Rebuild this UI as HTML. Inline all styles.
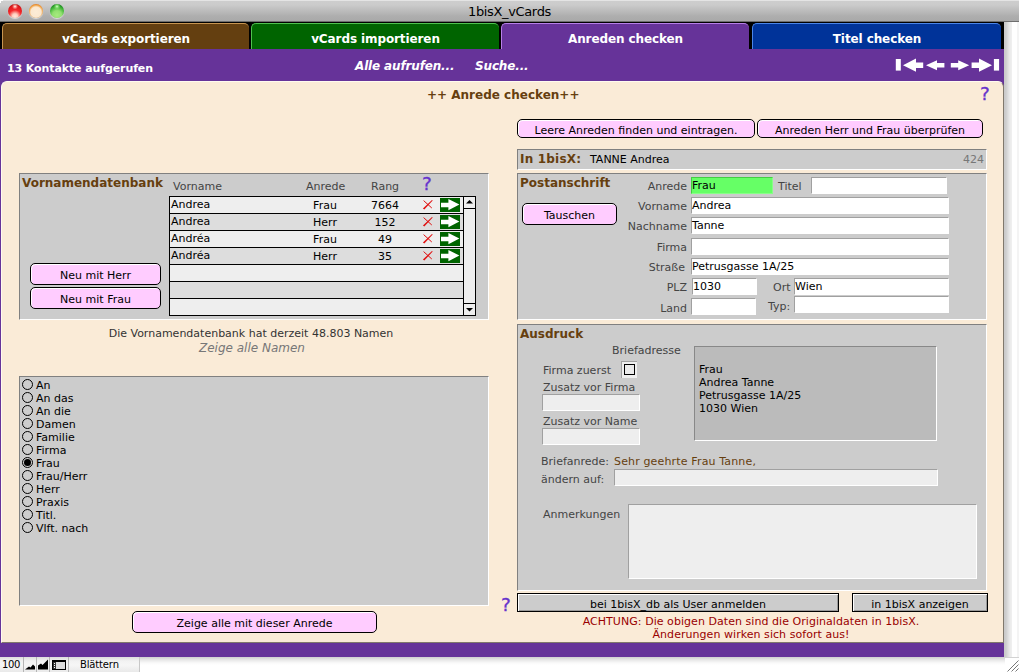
<!DOCTYPE html>
<html lang="de">
<head>
<meta charset="utf-8">
<title>1bisX_vCards</title>
<style>
html,body{margin:0;padding:0;}
body{width:1019px;height:672px;overflow:hidden;background:#fff;position:relative;
 font-family:"DejaVu Sans","Liberation Sans",sans-serif;font-size:11px;line-height:13px;color:#000;}
.a{position:absolute;white-space:nowrap;}
#titlebar{left:0;top:0;width:1019px;height:22px;
 background:linear-gradient(#e6e6e6 0,#e2e2e2 1px,#cdcdcd 1.5px,#cbcbcb 5px,#c3c3c3 8px,#b9b9b9 12px,#aeaeae 16px,#a9a9a9 21px,#a9a9a9 22px);}
#titlebar .ttl{left:0;width:1019px;top:3px;text-align:center;font-size:13px;line-height:17px;letter-spacing:-0.36px;color:#000;}
.light{width:14px;height:14px;border-radius:50%;top:4px;box-shadow:0 1px 1px rgba(255,255,255,.6);}
#tabrow{left:0;top:22px;width:1004px;height:27px;background:#000;}
.tab{top:1px;height:26px;box-sizing:border-box;border-radius:5px 5px 0 0;color:#fff;font-weight:bold;font-size:12px;
 line-height:16px;text-align:center;padding-top:7px;letter-spacing:-0.1px;}
#purple{left:0;top:49px;width:1004px;height:608px;background:#663399;}
#cream{left:1px;top:81px;width:1003px;height:562px;box-sizing:border-box;background:#faebd7;border-radius:6px 6px 0 0;
 border-top:1px solid #fffaf0;border-left:1px solid #fffaf0;border-right:1px solid #80786c;border-bottom:1px solid #80786c;}
.w{color:#fff;font-weight:bold;}
.panel{background:#ccc;box-sizing:border-box;border-top:1px solid #808080;border-left:1px solid #808080;border-right:1px solid #fff;border-bottom:1px solid #fff;}
.h{font-weight:bold;font-size:12px;color:#663f0f;letter-spacing:0;}
.lbl{color:#444;}
.r{text-align:right;}
.btn{box-sizing:border-box;background:#fcf;border:1px solid #000;border-radius:5px;text-align:center;box-shadow:inset 1px 1px 0 #fff;line-height:13px;padding-top:5px;height:22px;}
.fld{box-sizing:border-box;background:#fff;border-top:1px solid #a0a0a0;border-left:1px solid #a0a0a0;border-right:1px solid #fff;border-bottom:1px solid #fff;padding-left:0;padding-top:1px;line-height:13px;}
.fe{background:#eee;}
.gbtn{box-sizing:border-box;background:#ccc;border:1px solid #000;box-shadow:inset 1px 1px 0 #fff,inset -1px -1px 0 #999;text-align:center;}
.q{color:#6633cc;font-size:18.5px;line-height:20px;-webkit-text-stroke:0.3px #6633cc;font-family:"DejaVu Sans",sans-serif;}
.row{left:170px;width:293px;height:16px;}
.x{left:422px;color:#e01010;font-size:13px;line-height:16px;}
.rad{left:22px;width:9px;height:9px;border:1px solid #000;border-radius:50%;background:#cdcdcd;}
</style>
</head>
<body>

<!-- ======= window title bar ======= -->
<div id="titlebar" class="a">
  <div class="a light" style="left:8px;background:radial-gradient(circle at 50% 18%,#fff 0,#ff9a90 8%,rgba(255,255,255,0) 22%),radial-gradient(circle at 50% 88%,#ffe6d8 0,#ffd0c0 18%,#f4282a 45%,#e01a1c 70%,#8c1010 100%);"></div>
  <div class="a light" style="left:29px;background:radial-gradient(circle at 50% 58%,#fdecd6 0,#fbe8d0 48%,#f0a040 66%,#d8600c 82%,#a84808 100%);"></div>
  <div class="a light" style="left:50px;background:radial-gradient(circle at 50% 18%,#d8ffd0 0,#7fdc6a 10%,rgba(255,255,255,0) 24%),radial-gradient(circle at 50% 80%,#a6ea7e 0,#92e070 35%,#4cbc40 58%,#1c8c20 80%,#0c6010 100%);"></div>
  <div class="a ttl">1bisX_vCards</div>
  <div class="a" style="left:0;top:21px;width:1019px;height:1px;background:#6e6e6e;"></div>
  <div class="a" style="left:0;top:0;width:3px;height:1px;background:#fff;"></div><div class="a" style="left:0;top:1px;width:1px;height:2px;background:#fff;"></div>
</div>

<!-- ======= tabs ======= -->
<div id="tabrow" class="a">
  <div class="a tab" style="left:2px;width:247px;background:#643f10;border-top:1px solid #c89550;border-left:1px solid #c89550;">vCards exportieren</div>
  <div class="a tab" style="left:251px;width:248px;background:#006400;border-top:1px solid #4fc24f;border-left:1px solid #4fc24f;">vCards importieren</div>
  <div class="a tab" style="left:501px;width:248px;background:#663399;border-top:1px solid #b77fe8;border-left:1px solid #b77fe8;">Anreden checken</div>
  <div class="a tab" style="left:752px;width:249px;background:#003399;border-top:1px solid #4a85e8;border-left:1px solid #4a85e8;">Titel checken</div>
</div>

<div id="purple" class="a"></div>
<div id="cream" class="a"></div>

<!-- ======= purple header row ======= -->
<div class="a w" style="left:7px;top:62px;font-size:11px;line-height:14px;letter-spacing:-0.1px;">13 Kontakte aufgerufen</div>
<div class="a w" style="left:355px;top:59px;font-size:12px;line-height:15px;font-style:italic;letter-spacing:-0.15px;">Alle aufrufen...</div>
<div class="a w" style="left:475px;top:59px;font-size:12px;line-height:15px;font-style:italic;letter-spacing:-0.15px;">Suche...</div>
<svg class="a" style="left:895px;top:56px;" width="106" height="18" viewBox="0 0 106 18">
  <g fill="#fff">
    <rect x="0.8" y="3" width="5" height="11.6"/>
    <path d="M8 9.2 L21 2.6 L21 6.4 L28.2 6.4 L28.2 12 L21 12 L21 15.8 Z"/>
    <path d="M31 9.2 L42 4.2 L42 6.9 L49.4 6.9 L49.4 11.5 L42 11.5 L42 14.2 Z"/>
    <path d="M74.2 9.2 L63.2 4.2 L63.2 6.9 L55.8 6.9 L55.8 11.5 L63.2 11.5 L63.2 14.2 Z"/>
    <path d="M97 9.2 L84 2.6 L84 6.4 L76.6 6.4 L76.6 12 L84 12 L84 15.8 Z"/>
    <rect x="98.9" y="3" width="5.2" height="11.6"/>
  </g>
</svg>

<!-- ======= heading ======= -->
<div class="a h" style="left:427px;top:88px;line-height:15px;">++ Anrede checken++</div>
<div class="a q" style="left:980px;top:84px;">?</div>

<!-- ======= window scrollbars / status bar ======= -->
<div class="a" style="left:1004px;top:22px;width:15px;height:635px;background:linear-gradient(90deg,#c9c9c9 0,#cecece 2px,#dedede 4px,#ebebeb 6px,#f0f0f0 8px,#fff 8.5px,#fff 13px,#f4f4f4 13.5px,#f4f4f4 15px);"></div>
<div class="a" style="left:0;top:657px;width:1019px;height:15px;background:linear-gradient(#cfcfcf 0,#e8e8e8 3px,#fafafa 6px,#fff 8px,#fff 100%);"></div>
<div class="a" style="left:1005px;top:658px;width:14px;height:14px;background:#fff;"></div>
<svg class="a" style="left:1005px;top:658px;" width="14" height="14" viewBox="0 0 14 14"><g stroke="#777" stroke-width="1"><path d="M2.5 13.5 L13.5 2.5 M6.5 13.5 L13.5 6.5 M10.5 13.5 L13.5 10.5" fill="none"/></g></svg>
<div class="a" style="left:0;top:657px;width:139px;height:15px;background:linear-gradient(#dcdcdc 0,#f2f2f2 4px,#f6f6f6 8px,#e9e9e9 15px);"></div>
<div class="a" style="left:23px;top:657px;width:1px;height:15px;background:#b5b5b5;"></div>
<div class="a" style="left:36px;top:657px;width:1px;height:15px;background:#b5b5b5;"></div>
<div class="a" style="left:49px;top:657px;width:1px;height:15px;background:#b5b5b5;"></div>
<div class="a" style="left:68px;top:657px;width:1px;height:15px;background:#b5b5b5;"></div>
<div class="a" style="left:139px;top:657px;width:1px;height:15px;background:#c8c8c8;"></div>
<div class="a" style="left:2px;top:658px;font-size:10px;line-height:13px;letter-spacing:-0.3px;">100</div>
<svg class="a" style="left:24px;top:658px;" width="45" height="14" viewBox="0 0 45 14">
  <path d="M1 11.5 L5 8.5 L6.5 9.5 L9 6.5 L11 8.5 L11 11.5 Z" fill="#000"/>
  <path d="M14 11.5 L14 7.5 L17 5.5 L18.5 7 L24 1.5 L24 11.5 Z" fill="#000"/>
  <rect x="28.5" y="2.5" width="13" height="9" fill="#ddd" stroke="#000"/>
  <rect x="28" y="2" width="14" height="2" fill="#000"/>
  <rect x="29" y="4" width="3" height="7" fill="#333"/>
  <rect x="30" y="5" width="1" height="1" fill="#fff"/><rect x="30" y="7" width="1" height="1" fill="#fff"/><rect x="30" y="9" width="1" height="1" fill="#fff"/>
</svg>
<div class="a" style="left:80px;top:658px;font-size:10px;line-height:13px;letter-spacing:-0.15px;">Blättern</div>

<!-- ======= Vornamendatenbank panel ======= -->
<div class="a panel" style="left:19px;top:173px;width:470px;height:147px;"></div>
<div class="a h" style="left:22px;top:176px;line-height:15px;">Vornamendatenbank</div>
<div class="a lbl" style="left:173px;top:180px;">Vorname</div>
<div class="a lbl" style="left:306px;top:180px;">Anrede</div>
<div class="a lbl" style="left:371px;top:180px;">Rang</div>
<div class="a q" style="left:422px;top:174px;">?</div>
<div class="a" style="left:169px;top:196px;width:307px;height:120px;background:#000;"></div>
<div class="a row" style="top:197px;background:#eee;"></div>
<div class="a" style="left:171px;top:198px;">Andrea</div><div class="a" style="left:295px;top:199px;width:60px;text-align:center;">Frau</div><div class="a" style="left:355px;top:199px;width:60px;text-align:center;">7664</div>
<svg class="a" style="left:422px;top:199px;" width="12" height="12" viewBox="0 0 12 12"><path d="M0.9 9.4 L2.3 10.6 L10.7 1.6 L10.0 1.0 Z" fill="#e01010"/><path d="M1.6 1.6 L9.8 9.0" stroke="#e01010" stroke-width="1" fill="none"/></svg><svg class="a" style="left:440px;top:198px;" width="20" height="14" viewBox="0 0 20 14"><rect width="20" height="14" fill="#006400"/><path d="M1 4.8 H8.4 V1 L19.4 6.6 L8.4 12.2 V9.2 H1 Z" fill="#fff"/></svg>
<div class="a row" style="top:214px;background:#ddd;"></div>
<div class="a" style="left:171px;top:215px;">Andrea</div><div class="a" style="left:295px;top:216px;width:60px;text-align:center;">Herr</div><div class="a" style="left:355px;top:216px;width:60px;text-align:center;">152</div>
<svg class="a" style="left:422px;top:216px;" width="12" height="12" viewBox="0 0 12 12"><path d="M0.9 9.4 L2.3 10.6 L10.7 1.6 L10.0 1.0 Z" fill="#e01010"/><path d="M1.6 1.6 L9.8 9.0" stroke="#e01010" stroke-width="1" fill="none"/></svg><svg class="a" style="left:440px;top:215px;" width="20" height="14" viewBox="0 0 20 14"><rect width="20" height="14" fill="#006400"/><path d="M1 4.8 H8.4 V1 L19.4 6.6 L8.4 12.2 V9.2 H1 Z" fill="#fff"/></svg>
<div class="a row" style="top:231px;background:#eee;"></div>
<div class="a" style="left:171px;top:232px;">Andréa</div><div class="a" style="left:295px;top:233px;width:60px;text-align:center;">Frau</div><div class="a" style="left:355px;top:233px;width:60px;text-align:center;">49</div>
<svg class="a" style="left:422px;top:233px;" width="12" height="12" viewBox="0 0 12 12"><path d="M0.9 9.4 L2.3 10.6 L10.7 1.6 L10.0 1.0 Z" fill="#e01010"/><path d="M1.6 1.6 L9.8 9.0" stroke="#e01010" stroke-width="1" fill="none"/></svg><svg class="a" style="left:440px;top:232px;" width="20" height="14" viewBox="0 0 20 14"><rect width="20" height="14" fill="#006400"/><path d="M1 4.8 H8.4 V1 L19.4 6.6 L8.4 12.2 V9.2 H1 Z" fill="#fff"/></svg>
<div class="a row" style="top:248px;background:#ddd;"></div>
<div class="a" style="left:171px;top:249px;">Andréa</div><div class="a" style="left:295px;top:250px;width:60px;text-align:center;">Herr</div><div class="a" style="left:355px;top:250px;width:60px;text-align:center;">35</div>
<svg class="a" style="left:422px;top:250px;" width="12" height="12" viewBox="0 0 12 12"><path d="M0.9 9.4 L2.3 10.6 L10.7 1.6 L10.0 1.0 Z" fill="#e01010"/><path d="M1.6 1.6 L9.8 9.0" stroke="#e01010" stroke-width="1" fill="none"/></svg><svg class="a" style="left:440px;top:249px;" width="20" height="14" viewBox="0 0 20 14"><rect width="20" height="14" fill="#006400"/><path d="M1 4.8 H8.4 V1 L19.4 6.6 L8.4 12.2 V9.2 H1 Z" fill="#fff"/></svg>
<div class="a row" style="top:265px;background:#eee;"></div>
<div class="a row" style="top:282px;background:#ddd;"></div>
<div class="a row" style="top:299px;background:#eee;"></div>

<div class="a" style="left:464px;top:197px;width:11px;height:11px;background:#eee;"></div>
<div class="a" style="left:464px;top:209px;width:11px;height:94px;background:#eee;"></div>
<div class="a" style="left:464px;top:304px;width:11px;height:11px;background:#eee;"></div>
<svg class="a" style="left:464px;top:197px;" width="11" height="11" viewBox="0 0 11 11"><path d="M2 6.5 L5.5 3 L9 6.5 Z" fill="#000"/></svg>
<svg class="a" style="left:464px;top:304px;" width="11" height="11" viewBox="0 0 11 11"><path d="M2 4 L5.5 7.5 L9 4 Z" fill="#000"/></svg>
<div class="a btn" style="left:30px;top:263px;width:131px;">Neu mit Herr</div>
<div class="a btn" style="left:30px;top:287px;width:131px;">Neu mit Frau</div>
<div class="a" style="left:18px;top:327px;width:466px;text-align:center;color:#333;">Die Vornamendatenbank hat derzeit 48.803 Namen</div>
<div class="a" style="left:19px;top:341px;width:466px;text-align:center;color:#777;font-style:italic;font-size:12px;line-height:15px;">Zeige alle Namen</div>

<!-- ======= Anrede radio list panel ======= -->
<div class="a panel" style="left:19px;top:376px;width:470px;height:230px;"></div>
<div class="a rad" style="top:379px;"></div><div class="a" style="left:36px;top:379px;">An</div>
<div class="a rad" style="top:392px;"></div><div class="a" style="left:36px;top:392px;">An das</div>
<div class="a rad" style="top:405px;"></div><div class="a" style="left:36px;top:405px;">An die</div>
<div class="a rad" style="top:418px;"></div><div class="a" style="left:36px;top:418px;">Damen</div>
<div class="a rad" style="top:431px;"></div><div class="a" style="left:36px;top:431px;">Familie</div>
<div class="a rad" style="top:444px;"></div><div class="a" style="left:36px;top:444px;">Firma</div>
<div class="a rad" style="top:457px;"></div><div class="a" style="left:24px;top:459px;width:7px;height:7px;border-radius:50%;background:#000;"></div><div class="a" style="left:36px;top:457px;">Frau</div>
<div class="a rad" style="top:470px;"></div><div class="a" style="left:36px;top:470px;">Frau/Herr</div>
<div class="a rad" style="top:483px;"></div><div class="a" style="left:36px;top:483px;">Herr</div>
<div class="a rad" style="top:496px;"></div><div class="a" style="left:36px;top:496px;">Praxis</div>
<div class="a rad" style="top:509px;"></div><div class="a" style="left:36px;top:509px;">Titl.</div>
<div class="a rad" style="top:522px;"></div><div class="a" style="left:36px;top:522px;">Vlft. nach</div>
<div class="a btn" style="left:132px;top:611px;width:245px;">Zeige alle mit dieser Anrede</div>

<!-- ======= right column ======= -->
<div class="a btn" style="left:517px;top:119px;width:238px;height:19px;padding-top:4px;">Leere Anreden finden und eintragen.</div>
<div class="a btn" style="left:757px;top:119px;width:226px;height:19px;padding-top:4px;">Anreden Herr und Frau überprüfen</div>

<div class="a panel" style="left:517px;top:149px;width:470px;height:21px;"></div>
<div class="a h" style="left:520px;top:152px;line-height:15px;letter-spacing:0.2px;">In 1bisX:</div>
<div class="a" style="left:590px;top:153px;">TANNE Andrea</div>
<div class="a" style="left:921px;top:153px;width:63px;text-align:right;color:#777;">424</div>

<div class="a panel" style="left:517px;top:173px;width:470px;height:147px;"></div>
<div class="a h" style="left:520px;top:176px;line-height:15px;">Postanschrift</div>
<div class="a btn" style="left:522px;top:203px;width:95px;">Tauschen</div>

<div class="a lbl r" style="left:600px;width:87px;top:180px;">Anrede</div>
<div class="a fld" style="left:691px;top:177px;width:82px;height:17px;background:#6f6;border-color:#4c4 #8f8 #8f8 #4c4;">Frau</div>
<div class="a lbl" style="left:778px;top:180px;">Titel</div>
<div class="a fld" style="left:811px;top:177px;width:136px;height:17px;"></div>

<div class="a lbl r" style="left:600px;width:87px;top:200px;">Vorname</div>
<div class="a fld" style="left:691px;top:197px;width:258px;height:17px;">Andrea</div>
<div class="a lbl r" style="left:600px;width:87px;top:220px;">Nachname</div>
<div class="a fld" style="left:691px;top:217px;width:258px;height:17px;">Tanne</div>
<div class="a lbl r" style="left:600px;width:87px;top:241px;">Firma</div>
<div class="a fld" style="left:691px;top:238px;width:258px;height:17px;"></div>
<div class="a lbl r" style="left:600px;width:85px;top:261px;">Straße</div>
<div class="a fld" style="left:691px;top:258px;width:258px;height:17px;">Petrusgasse 1A/25</div>
<div class="a lbl r" style="left:600px;width:87px;top:281px;">PLZ</div>
<div class="a fld" style="left:692px;top:278px;width:65px;height:17px;">1030</div>
<div class="a lbl" style="left:773px;top:281px;">Ort</div>
<div class="a fld" style="left:794px;top:278px;width:155px;height:17px;">Wien</div>
<div class="a lbl r" style="left:600px;width:87px;top:302px;">Land</div>
<div class="a fld" style="left:691px;top:298px;width:65px;height:17px;"></div>
<div class="a lbl" style="left:768px;top:300px;">Typ:</div>
<div class="a fld" style="left:794px;top:296px;width:155px;height:17px;"></div>

<div class="a panel" style="left:517px;top:324px;width:470px;height:267px;"></div>
<div class="a h" style="left:520px;top:327px;line-height:15px;">Ausdruck</div>
<div class="a lbl" style="left:612px;top:344px;">Briefadresse</div>
<div class="a lbl" style="left:543px;top:364px;">Firma zuerst</div>
<div class="a" style="left:621px;top:361px;width:16px;height:17px;box-sizing:border-box;background:#eee;border-top:1px solid #a0a0a0;border-left:1px solid #a0a0a0;"></div>
<div class="a" style="left:624px;top:364px;width:11px;height:11px;box-sizing:border-box;border:1px solid #000;background:#eaeaea;"></div>
<div class="a lbl" style="left:543px;top:381px;">Zusatz vor Firma</div>
<div class="a fld fe" style="left:542px;top:394px;width:98px;height:17px;"></div>
<div class="a lbl" style="left:543px;top:415px;">Zusatz vor Name</div>
<div class="a fld fe" style="left:542px;top:428px;width:98px;height:17px;"></div>
<div class="a" style="left:694px;top:346px;width:243px;height:95px;box-sizing:border-box;background:#bbb;border-top:1px solid #888;border-left:1px solid #888;border-right:1px solid #fff;border-bottom:1px solid #fff;"></div>
<div class="a" style="left:699px;top:363px;line-height:13px;white-space:pre;">Frau
Andrea Tanne
Petrusgasse 1A/25
1030 Wien</div>
<div class="a lbl" style="left:541px;top:455px;">Briefanrede:</div>
<div class="a" style="left:614px;top:455px;color:#663f0f;letter-spacing:0.15px;">Sehr geehrte Frau Tanne,</div>
<div class="a lbl" style="left:541px;top:473px;">ändern auf:</div>
<div class="a fld fe" style="left:614px;top:469px;width:324px;height:17px;"></div>
<div class="a lbl" style="left:543px;top:508px;">Anmerkungen</div>
<div class="a fld fe" style="left:628px;top:504px;width:349px;height:75px;"></div>

<div class="a q" style="left:501px;top:595px;">?</div>
<div class="a gbtn" style="left:517px;top:593px;width:322px;height:19px;line-height:13px;padding-top:4px;">bei 1bisX_db als User anmelden</div>
<div class="a gbtn" style="left:852px;top:593px;width:136px;height:19px;line-height:13px;padding-top:4px;">in 1bisX anzeigen</div>
<div class="a" style="left:516px;top:615px;width:470px;text-align:center;color:#990000;letter-spacing:0.05px;line-height:13px;white-space:pre;">ACHTUNG: Die obigen Daten sind die Originaldaten in 1bisX.
Änderungen wirken sich sofort aus!</div>

</body>
</html>
